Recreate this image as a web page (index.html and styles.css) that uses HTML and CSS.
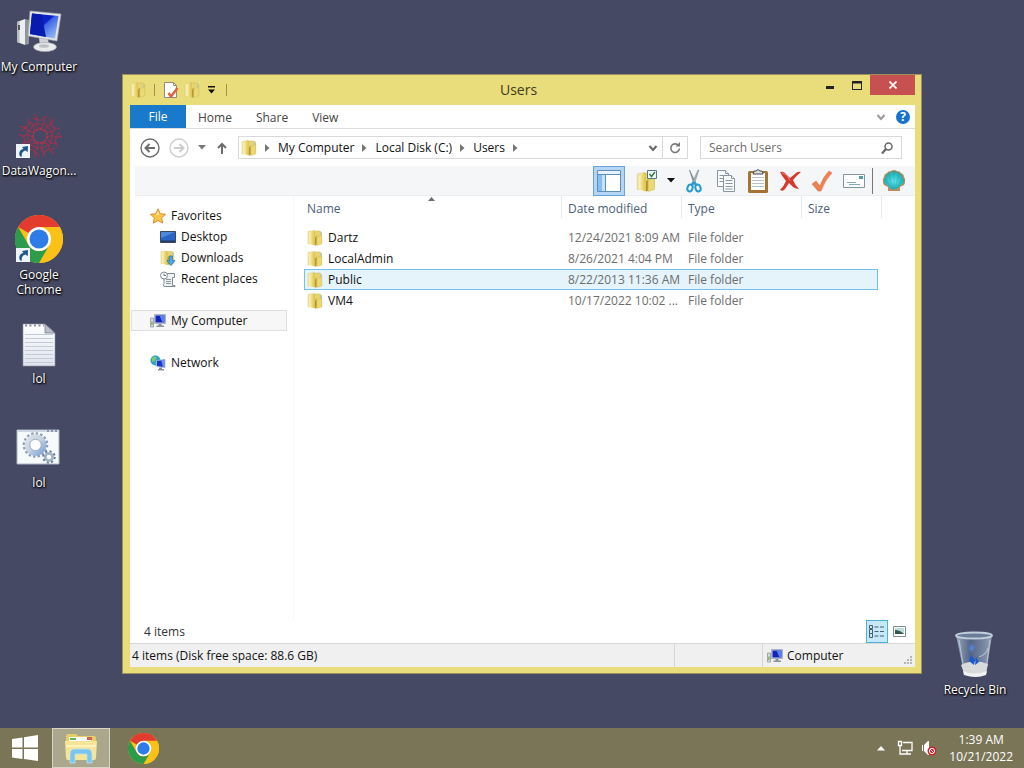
FILE: index.html
```html
<!DOCTYPE html>
<html lang="en">
<head>
    <meta charset="UTF-8">
    <meta name="viewport" content="width=device-width, initial-scale=1.0">
    <title>Users</title>
    <link rel="stylesheet" href="styles.css">
</head>
<body>
    <!-- Shared icons -->
    <svg class="sprite" aria-hidden="true">
        <defs>
            <linearGradient id="gFolder" x1="0" x2="1" y1="0" y2="0">
                <stop offset="0" stop-color="#fbf4c0"/><stop offset=".5" stop-color="#ecd873"/><stop offset="1" stop-color="#dcc050"/>
            </linearGradient>
            <linearGradient id="gScreen" x1="0" x2="1" y1="0" y2="1">
                <stop offset="0" stop-color="#0a1cae"/><stop offset=".45" stop-color="#0b22c8"/><stop offset=".5" stop-color="#3f67e4"/><stop offset="1" stop-color="#a9ccfa"/>
            </linearGradient>
            <linearGradient id="gPaper" x1="0" x2="0" y1="0" y2="1">
                <stop offset="0" stop-color="#fff"/><stop offset="1" stop-color="#dfe3ee"/>
            </linearGradient>
            <linearGradient id="gGear" x1="0" x2="1" y1="0" y2="1">
                <stop offset="0" stop-color="#dce2e6"/><stop offset=".5" stop-color="#c3d2e2"/><stop offset="1" stop-color="#7fa6d8"/>
            </linearGradient>
            <linearGradient id="gBin" x1="0" x2="1" y1="0" y2="0">
                <stop offset="0" stop-color="#b4c5da" stop-opacity=".8"/><stop offset=".4" stop-color="#5f789e" stop-opacity=".6"/><stop offset="1" stop-color="#a8b8cc" stop-opacity=".8"/>
            </linearGradient>
            <radialGradient id="gShell" cx=".5" cy=".55" r=".55">
                <stop offset="0" stop-color="#5fe4ee"/><stop offset=".65" stop-color="#2bbcc2"/><stop offset="1" stop-color="#3f9c92"/>
            </radialGradient>
        </defs>
        <symbol id="folder" viewBox="0 0 16 16">
            <path d="M1 1.500L7 .5v13L1 14z" fill="#f3e7a0" stroke="#dac878" stroke-width=".5"/>
            <path d="M6 1h7l1.500 1.500V13H6z" fill="#e6d470" stroke="#cbb654" stroke-width=".5"/>
            <path d="M13.300 2.500h1.200v3h-1.200z" fill="#9fc3cc"/>
            <path d="M2.500 3l5.500-2v14.500L2.500 14z" fill="url(#gFolder)"/>
            <path d="M8 7.500l1.800-2v9.500L8 15.500z" fill="#b2972f"/>
            <path d="M9.800 6.500l5-1.500v9l-5 1.500z" fill="#ead975" stroke="#cfb954" stroke-width=".4"/>
        </symbol>
        <symbol id="chrome" viewBox="0 0 48 48">
            <circle cx="24" cy="24" r="24" fill="#fbc116"/>
            <path d="M24 24L3.200 12A24 24 0 0 1 44.800 12z" fill="#e33b2e"/>
            <path d="M24 12h20.800A24 24 0 0 1 24 48l10.400-18z" fill="#fbc116"/>
            <path d="M3.200 12L13.600 30A12 12 0 0 0 34.400 30L24 48A24 24 0 0 1 3.200 12z" fill="#2c9b4b"/>
            <circle cx="24" cy="24" r="12" fill="#fff"/>
            <circle cx="24" cy="24" r="9.500" fill="#2f7be8"/>
        </symbol>
        <symbol id="computer" viewBox="0 0 48 48">
            <path d="M2 15l8-3v26l-8-3z" fill="#eceef0"/>
            <path d="M2 15l2.500-1v22L2 35z" fill="#b7bbc0"/>
            <path d="M10 12l4 1v24l-4 1z" fill="#8f959c"/>
            <path d="M3 18h2v5H3z" fill="#55585c"/>
            <path d="M24 30l9 1 1 9h-9z" fill="#cfd3d6"/>
            <ellipse cx="30" cy="40" rx="11.500" ry="4.500" fill="#e9ebec" stroke="#a7abb0" stroke-width=".7"/>
            <ellipse cx="29" cy="39" rx="5" ry="1.800" fill="#bcc0c4"/>
            <path d="M15 4l31 3-4 27-29-5z" fill="#e2e5e8" stroke="#a5a9b0" stroke-width=".6"/>
            <path d="M17 6.500l26.500 2.500-3.500 22.500-25-4.500z" fill="url(#gScreen)"/>
            <path d="M17 6.500l9.500.9L31 30l-16-3z" fill="#071cae"/>
        </symbol>
        <symbol id="pc-small" viewBox="0 0 16 16">
            <path d="M.5 5h3v9h-3z" fill="#d5dbdd" stroke="#777f83" stroke-width=".6"/>
            <path d="M1.200 8.500h1.500V12H1.200z" fill="#86b05d"/>
            <path d="M4.500 1.500h11v9h-11z" fill="#c9d1e6" stroke="#8691ad" stroke-width=".6"/>
            <path d="M5.500 2.500h9v7h-9z" fill="#1325b7"/>
            <path d="M9.500 2.500h5v7h-2z" fill="#5b80ea"/>
            <path d="M8.500 11h3v1.500H14V14H6.500v-1.500h2z" fill="#8a929b"/>
        </symbol>
        <symbol id="shortcut" viewBox="0 0 14 14">
            <path d="M0 0h14v14H0z" fill="#eef4fa"/>
            <path d="M4 12.500C2.200 8.500 4 5.500 7.500 5L6 3l6-1-.3 6.300-2-1.800C7 7 5 9 6 12.500z" fill="#1d578f"/>
        </symbol>
        <symbol id="crumb" viewBox="0 0 5 8"><path d="M0 0l4.500 4L0 8z" fill="#777"/></symbol>
        <symbol id="chevron" viewBox="0 0 10 8"><path d="M1.500 2L5 6l3.500-4" fill="none" stroke="currentColor" stroke-width="2"/></symbol>
    </svg>

    <main class="desktop">
        <nav class="shortcuts" aria-label="Desktop icons">
            <a class="shortcut" href="#">
                <svg class="shortcut-icon"><use href="#computer"/></svg>
                <span>My Computer</span>
            </a>
            <a class="shortcut" href="#">
                <svg class="shortcut-icon" viewBox="0 0 48 48">
                    <g fill="none" stroke="#973450" stroke-width="1.200">
                        <g id="ray"><path d="M25 18l-4-5 2-4-3-6M25 18l5-5-2-5 4-3M17 7l7 2 6 0M21 13l9 0"/></g>
                        <use href="#ray" transform="rotate(51 25 25)"/>
                        <use href="#ray" transform="rotate(103 25 25)"/>
                        <use href="#ray" transform="rotate(154 25 25)"/>
                        <use href="#ray" transform="rotate(206 25 25)"/>
                        <use href="#ray" transform="rotate(257 25 25)"/>
                        <use href="#ray" transform="rotate(309 25 25)"/>
                        <circle cx="25" cy="25" r="7" stroke="#b8334c" stroke-width="1.500" stroke-dasharray="3 1"/>
                    </g>
                    <use href="#shortcut" x="1" y="33" width="14" height="14"/>
                </svg>
                <span>DataWagon...</span>
            </a>
            <a class="shortcut" href="#">
                <svg class="shortcut-icon" viewBox="0 0 48 48">
                    <use href="#chrome" width="48" height="48"/>
                    <use href="#shortcut" x="1" y="33" width="14" height="14"/>
                </svg>
                <span>Google Chrome</span>
            </a>
            <a class="shortcut" href="#">
                <svg class="shortcut-icon" viewBox="0 0 48 48">
                    <path d="M8 5h22l10 9v33H8z" fill="url(#gPaper)" stroke="#8d93a4" stroke-width=".6"/>
                    <path d="M30 5v9h10z" fill="#b9bfcc" stroke="#6b7080" stroke-width=".7"/>
                    <path d="M10 6.500h19" stroke="#8b90a0" stroke-width="2" stroke-dasharray="2 2.500"/>
                    <path d="M10 15.500h28M10 19.500h28M10 23.500h28M10 27.500h28M10 31.500h28M10 35.500h28M10 39.500h28M10 43.500h28" stroke="#c3cad8"/>
                </svg>
                <span>lol</span>
            </a>
            <a class="shortcut" href="#">
                <svg class="shortcut-icon" viewBox="0 0 48 48">
                    <path d="M2 7h42v34H2z" fill="#f6fafb" stroke="#a9b3c4"/>
                    <path d="M2 7h42v2H2z" fill="#ccd5e2"/>
                    <path d="M32 8h2M36 8h2M40 8h2" stroke="#4d5872"/>
                    <circle cx="20.500" cy="22" r="11.500" fill="none" stroke="#8a9ab2" stroke-width="2.600" stroke-dasharray="2.400 2.100"/>
                    <circle cx="20.500" cy="22" r="8.300" fill="#fff" stroke="url(#gGear)" stroke-width="5"/>
                    <circle cx="20.500" cy="22" r="5.700" fill="none" stroke="#7f93b4" stroke-width=".7"/>
                    <circle cx="34" cy="34" r="5.500" fill="none" stroke="#687c98" stroke-width="2.500" stroke-dasharray="2 2.300"/>
                    <circle cx="34" cy="34" r="3.700" fill="#fff" stroke="#9fb4c8" stroke-width="2.800"/>
                </svg>
                <span>lol</span>
            </a>
        </nav>

        <a class="shortcut recycle-bin" href="#">
            <svg class="shortcut-icon" viewBox="0 0 48 48">
                <path d="M5 5h36l-6 39q-12 6-22 0z" fill="url(#gBin)"/>
                <path d="M10 35q13-7 27-1l-2 9q-11 6-22 0z" fill="#d8d9db"/>
                <path d="M12 41q11 5 24 0l-1 4q-10 4-22 0z" fill="#f2f2f2"/>
                <path d="M18 31l2-6 4 5-1 5zM25 27l3 5-4 3z" fill="#1d58cf"/>
                <path d="M20 14l4 3-3 5-3-3z" fill="#557fca"/>
                <path d="M8 10l5 30M39 10l-4 30M28 27q8-3 9-9" fill="none" stroke="#d4dfec" stroke-opacity=".6" stroke-width="1.200"/>
                <ellipse cx="23" cy="5.500" rx="18" ry="3" fill="#6a7d9b" stroke="#c3cedb" stroke-width="1.800"/>
            </svg>
            <span>Recycle Bin</span>
        </a>

        <section class="window" aria-label="Users">
            <header class="titlebar">
                <div class="quick-access">
                    <svg class="icon-16"><use href="#folder"/></svg>
                    <i class="bar-sep"></i>
                    <button class="qa-button" aria-label="Properties">
                        <svg class="icon-16" viewBox="0 0 16 16">
                            <path d="M1.500.5h9l3 3v12h-12z" fill="#fff" stroke="#8f8a80"/>
                            <path d="M10.500.5v3h3" fill="none" stroke="#8f8a80"/>
                            <path d="M5.500 11l2.500 3.500L14.500 6" fill="none" stroke="#df6640" stroke-width="2.600"/>
                        </svg>
                    </button>
                    <button class="qa-button" aria-label="New folder"><svg class="icon-16"><use href="#folder"/></svg></button>
                    <button class="qa-button qa-more" aria-label="Customize">
                        <svg width="7" height="8" viewBox="0 0 7 8"><path d="M0 0h7v1.500H0zM0 3.500h7L3.500 7.500z" fill="#111"/></svg>
                    </button>
                    <i class="bar-sep"></i>
                </div>
                <h1 class="title">Users</h1>
                <div class="controls">
                    <button class="control" aria-label="Minimize"><svg width="10" height="10"><path d="M1 6h8v3H1z" fill="#222"/></svg></button>
                    <button class="control" aria-label="Maximize"><svg width="10" height="9"><path d="M0 0h10v9H0zM1 2.500V8h8V2.500z" fill="#222" fill-rule="evenodd"/></svg></button>
                    <button class="control control-close" aria-label="Close"><svg width="8" height="8"><path d="M.5.5l7 7M7.500.5l-7 7" stroke="#fff" stroke-width="1.700"/></svg></button>
                </div>
            </header>

            <div class="client">
                <div class="ribbon">
                    <button class="tab tab-file">File</button>
                    <button class="tab">Home</button>
                    <button class="tab">Share</button>
                    <button class="tab">View</button>
                    <div class="ribbon-end">
                        <button class="plain" aria-label="Expand the ribbon"><svg class="grey" width="10" height="8"><use href="#chevron"/></svg></button>
                        <button class="plain help" aria-label="Help">?</button>
                    </div>
                </div>

                <div class="address-row">
                    <button class="plain" aria-label="Back">
                        <svg width="20" height="20" viewBox="0 0 20 20" fill="none" stroke="#6d6d6d"><circle cx="10" cy="10" r="9" stroke-width="1.400"/><path d="M15 10H6M9.500 6l-4 4 4 4" stroke-width="2"/></svg>
                    </button>
                    <button class="plain" aria-label="Forward">
                        <svg width="20" height="20" viewBox="0 0 20 20" fill="none" stroke="#cdcdcd"><circle cx="10" cy="10" r="9" stroke-width="1.400"/><path d="M5 10h9M10.500 6l4 4-4 4" stroke-width="2"/></svg>
                    </button>
                    <button class="plain" aria-label="Recent locations"><svg width="8" height="5"><path d="M0 0h8L4 4.500z" fill="#777"/></svg></button>
                    <button class="plain" aria-label="Up">
                        <svg width="12" height="12" viewBox="0 0 12 12" fill="none" stroke="#6d6d6d" stroke-width="2"><path d="M7 12V2M3 6l4-4 4 4"/></svg>
                    </button>
                    <div class="address">
                        <svg class="icon-16"><use href="#folder"/></svg>
                        <svg class="crumb-arrow"><use href="#crumb"/></svg>
                        <a href="#">My Computer</a>
                        <svg class="crumb-arrow"><use href="#crumb"/></svg>
                        <a href="#">Local Disk (C:)</a>
                        <svg class="crumb-arrow"><use href="#crumb"/></svg>
                        <a href="#">Users</a>
                        <svg class="crumb-arrow"><use href="#crumb"/></svg>
                        <button class="plain address-drop" aria-label="Previous locations"><svg width="10" height="8"><use href="#chevron"/></svg></button>
                        <button class="plain refresh" aria-label="Refresh">
                            <svg width="12" height="12" viewBox="0 0 12 12"><path d="M9.500 3.500a4.300 4.300 0 1 0 .9 3" fill="none" stroke="#777" stroke-width="1.600"/><path d="M6.500 4.500h4.500V0z" fill="#777"/></svg>
                        </button>
                    </div>
                    <div class="search">
                        <input type="text" placeholder="Search Users" aria-label="Search Users">
                        <svg width="12" height="12" viewBox="0 0 12 12" fill="none" stroke="#666"><circle cx="7.500" cy="4.500" r="3.500" stroke-width="1.500"/><path d="M5 7l-4 4.500" stroke-width="2.200"/></svg>
                    </div>
                </div>

                <div class="commands">
                    <button class="command active" aria-label="Navigation pane">
                        <svg width="24" height="22" viewBox="0 0 24 22"><path d="M.5.5h23v21H.5z" fill="#fff" stroke="#5a8fbe"/><path d="M1 1h22v3H1z" fill="#e8f1fa"/><path d="M1 4.500h22M8.500 5v16" stroke="#5a8fbe"/><path d="M1 5h7v16H1z" fill="#89bfee"/><path d="M5 5h3v16H5z" fill="#c7e2f8"/></svg>
                    </button>
                    <button class="command" aria-label="Select">
                        <svg width="24" height="24" viewBox="0 0 24 24"><use href="#folder" x="0" y="2" width="20" height="22"/><path d="M11.500 1.500h9v8h-9z" fill="#f1f8f3" stroke="#4f7b80"/><path d="M13.500 5l2 2.500L19 3" fill="none" stroke="#34774d" stroke-width="1.400"/></svg>
                    </button>
                    <button class="command command-arrow" aria-label="Select options"><svg width="8" height="5"><path d="M0 0h8L4 4.500z" fill="#111"/></svg></button>
                    <button class="command" aria-label="Cut">
                        <svg width="24" height="24" viewBox="0 0 24 24"><path d="M7 1l1 0 6 13-2 2z" fill="#7e8b95"/><path d="M17 1l-1 0-6 13 2 2z" fill="#a5b0b8" stroke="#69757e" stroke-width=".4"/><g fill="none" stroke="#249bd2" stroke-width="2"><path d="M12 13l-2.500 3M12 13l2.500 3"/><ellipse cx="8" cy="19" rx="2.500" ry="3.500" transform="rotate(20 8 19)"/><ellipse cx="16" cy="19" rx="2.500" ry="3.500" transform="rotate(-20 16 19)"/></g></svg>
                    </button>
                    <button class="command" aria-label="Copy">
                        <svg width="24" height="24" viewBox="0 0 24 24" fill="#fbfcfd" stroke="#8795a3"><path d="M3.500 1.500h8l3 3v13h-11z"/><path d="M11.500 1.500v3h3M5.500 6.500h5M5.500 9.500h5M5.500 12.500h5"/><path d="M9.500 6.500h8l3 3v13h-11z"/><path d="M17.500 6.500v3h3M11.500 11.500h7M11.500 14.500h7M11.500 17.500h7M11.500 20h7"/></svg>
                    </button>
                    <button class="command" aria-label="Paste">
                        <svg width="24" height="24" viewBox="0 0 24 24"><rect x="2" y="2" width="20" height="22" rx="1.500" fill="#a67332"/><path d="M5 4h14v17H5z" fill="#fff"/><path d="M6 8.500h12M6 11.500h12M6 14.500h12M6 17.500h12" stroke="#b5c2ce"/><path d="M8 2h2q2-3 4 0h2l1 3H7z" fill="#d9dde0" stroke="#454b50"/></svg>
                    </button>
                    <button class="command" aria-label="Delete">
                        <svg width="24" height="24" viewBox="0 0 24 24"><path d="M2 3q3-1 5 1l5 5 6-5q2-2 5-1-5 4-8 8 2 5 6 9-3 0-6-2l-4-4-4 6q-2 3-5 1 4-4 6-9Q4 7 2 3z" fill="#d43a2a"/><path d="M4 3.500q6 2 8 8" fill="none" stroke="#ef8a76"/></svg>
                    </button>
                    <button class="command" aria-label="Properties">
                        <svg width="24" height="24" viewBox="0 0 24 24"><path d="M2 15l4-3 4 5Q13 8 19 2l3 2Q15 11 11 22H8z" fill="#ee8252" stroke="#d96a43" stroke-width=".5"/></svg>
                    </button>
                    <button class="command" aria-label="E-mail">
                        <svg width="24" height="24" viewBox="0 0 24 24"><path d="M1.500 5.500h21v13h-21z" fill="#fff" stroke="#82949f"/><path d="M17 7h4v3h-4z" fill="#4d9fa7"/><path d="M5 13.500h9M7 15.500h11" stroke="#83a9bb"/></svg>
                    </button>
                    <i class="command-sep"></i>
                    <button class="command" aria-label="Shell">
                        <svg width="24" height="24" viewBox="0 0 24 24"><path d="M12 1q2 0 3 1 3 0 4 2 3 1 3 4 2 2 1 5 0 3-3 4l-2 1v4H6v-4l-2-1q-3-1-3-4-1-3 1-5 0-3 3-4 1-2 4-2 1-1 3-1z" fill="#c28b5b"/><path d="M12 2q2 0 3 1 3 0 4 2 2 1 2 4 2 2 1 4 0 2-3 3l-4 4q-3 1-6 0l-4-4q-3-1-3-3-1-2 1-4 0-3 2-4 1-2 4-2 1-1 3-1z" fill="url(#gShell)"/><path d="M12 20V3M11 20L7 5M13 20l4-15M10 20L3 9M14 20l7-11" stroke="#168b96" stroke-opacity=".4" stroke-width=".7"/></svg>
                    </button>
                </div>

                <div class="panes">
                    <nav class="tree" aria-label="Navigation pane">
                        <div class="tree-group">
                            <a class="tree-item" href="#">
                                <svg class="icon-16" viewBox="0 0 16 16"><path d="M8 .8l2.200 4.900 5.300.6-3.900 3.600 1.100 5.300L8 12.500l-4.700 2.700 1.100-5.300L.5 6.300l5.300-.6z" fill="#fbc545" stroke="#dd8d2b"/><path d="M8 3.500l1.200 3-3.700.5z" fill="#fff0b0"/></svg>
                                Favorites
                            </a>
                            <a class="tree-item child" href="#">
                                <svg class="icon-16" viewBox="0 0 16 16"><path d="M.5 2.500h15v11H.5z" fill="#2a65c5" stroke="#3a4760"/><path d="M1 3h14L1 9z" fill="#5088db"/><path d="M1 11.500h14V13H1z" fill="#24395f"/></svg>
                                Desktop
                            </a>
                            <a class="tree-item child" href="#">
                                <svg class="icon-16" viewBox="0 0 16 16"><use href="#folder" width="15" height="16"/><path d="M9.500 6h3v4.500H15L11 15.500l-4-5h2.500z" fill="#4aa8ec" stroke="#2470ad" stroke-width=".7"/></svg>
                                Downloads
                            </a>
                            <a class="tree-item child" href="#">
                                <svg class="icon-16" viewBox="0 0 16 16"><path d="M4 2.500h10.500v4h-2v8H15v1H4q-1.500-2 0-3z" fill="#eef1f2" stroke="#808c91"/><path d="M6 8.500h5M6 10.500h5M6 12.500h5" stroke="#8c989c"/><circle cx="4" cy="4.500" r="3.500" fill="#fff" stroke="#808c91"/><path d="M4 2.500v2h2" fill="none" stroke="#66777c"/></svg>
                                Recent places
                            </a>
                        </div>
                        <div class="tree-group">
                            <a class="tree-item selected" href="#">
                                <svg class="icon-16"><use href="#pc-small"/></svg>
                                My Computer
                            </a>
                        </div>
                        <div class="tree-group">
                            <a class="tree-item" href="#">
                                <svg class="icon-16" viewBox="0 0 16 16"><circle cx="5.500" cy="5.500" r="5" fill="#2e9fc0"/><path d="M2 3q3-3 5 0l-2 3-3 1zM5 8l3-1-1 3z" fill="#77ca7e"/><path d="M6.500 5.500l8.500-1v8l-8.500-1z" fill="#1a35c2" stroke="#bcc8de" stroke-width=".8"/><path d="M11 5l4-.5v8l-2-.3z" fill="#6d93ee"/><path d="M9 12.500h3V14h2v1.500H8V14h1z" fill="#87919b"/></svg>
                                Network
                            </a>
                        </div>
                    </nav>

                    <div class="list">
                        <table class="files">
                            <colgroup><col><col class="col-date"><col class="col-type"><col class="col-size"><col class="col-edge"></colgroup>
                            <thead>
                                <tr>
                                    <th class="sorted">Name<svg class="sort" width="7" height="4"><path d="M0 4h7L3.500 0z" fill="#6d6d6d"/></svg></th>
                                    <th>Date modified</th>
                                    <th>Type</th>
                                    <th colspan="2">Size</th>
                                </tr>
                            </thead>
                            <tbody>
                                <tr><td><div class="file"><svg class="icon-16"><use href="#folder"/></svg>Dartz</div></td><td>12/24/2021 8:09 AM</td><td>File folder</td><td></td></tr>
                                <tr><td><div class="file"><svg class="icon-16"><use href="#folder"/></svg>LocalAdmin</div></td><td>8/26/2021 4:04 PM</td><td>File folder</td><td></td></tr>
                                <tr class="hovered"><td><div class="file"><svg class="icon-16"><use href="#folder"/></svg>Public</div></td><td>8/22/2013 11:36 AM</td><td>File folder</td><td></td></tr>
                                <tr><td><div class="file"><svg class="icon-16"><use href="#folder"/></svg>VM4</div></td><td>10/17/2022 10:02 ...</td><td>File folder</td><td></td></tr>
                            </tbody>
                        </table>
                    </div>
                </div>

                <div class="details">
                    <span>4 items</span>
                    <div class="view-modes">
                        <button class="view-mode active" aria-label="Details">
                            <svg width="16" height="13" viewBox="0 0 16 13" fill="none" stroke="#45616c"><path d="M.5.5h3v3h-3zM.5 4.500h3v4h-3zM.5 8.500h3v4h-3z"/><path d="M5.500 2h4M11 2h4M5.500 6.500h4M11 6.500h4M5.500 11h4M11 11h4"/></svg>
                        </button>
                        <button class="view-mode" aria-label="Large icons">
                            <svg width="13" height="11" viewBox="0 0 13 11"><path d="M.5.5h12v10H.5z" fill="#fff" stroke="#828b90"/><path d="M2 2h9v6H2z" fill="#bcdde0"/><path d="M2 4q5 0 9 4H2z" fill="#31584e"/></svg>
                        </button>
                    </div>
                </div>

                <footer class="status">
                    <span class="status-main">4 items (Disk free space: 88.6 GB)</span>
                    <span class="status-blank"></span>
                    <span class="status-zone">
                        <svg class="icon-16"><use href="#pc-small"/></svg>
                        Computer
                        <svg class="grip" width="9" height="9"><path d="M6 0h2v2H6zM3 3h2v2H3zM6 3h2v2H6zM0 6h2v2H0zM3 6h2v2H3zM6 6h2v2H6z" fill="#b5b5b5"/></svg>
                    </span>
                </footer>
            </div>
        </section>
    </main>

    <footer class="taskbar">
        <button class="start" aria-label="Start">
            <svg width="26" height="26" viewBox="0 0 26 26"><path d="M0 4l10.500-1.500v10H0zM12 2.200L26 0v12.500H12zM0 14h10.500v10L0 22.500zM12 14h14v12l-14-2z" fill="#fff"/></svg>
        </button>
        <button class="task active" aria-label="File Explorer">
            <svg width="34" height="32" viewBox="0 0 34 32">
                <path d="M2 4q0-2 2-2h8l2 2h16q2 0 2 2v20H2z" fill="#e5cf68"/>
                <path d="M5 5h22v4H5z" fill="#fff"/><path d="M6 6h6v2H6z" fill="#62b84b"/><path d="M23 5h5v3h-5z" fill="#d6634b"/>
                <path d="M1 9h32l-1 17q0 2-2 2H4q-2 0-2-2z" fill="#f6e597"/>
                <path d="M2 13h30v2H2z" fill="#fbf2bd"/>
                <path d="M6 31V22q0-5 5-5h12q5 0 5 5v9h-5v-8q0-1-1-1H12q-1 0-1 1v8z" fill="#7bc5ec" stroke="#b9e4f7" stroke-width=".8"/>
            </svg>
        </button>
        <button class="task" aria-label="Google Chrome">
            <svg width="31" height="31"><use href="#chrome"/></svg>
        </button>
        <div class="tray">
            <button class="plain" aria-label="Show hidden icons"><svg width="8" height="5"><path d="M0 4.500h8L4 0z" fill="#fff"/></svg></button>
            <svg width="16" height="16" viewBox="0 0 16 16" fill="none" stroke="#fff" stroke-width="1.300"><path d="M6 2.500h9v8H5M10 10.500v3M6 14h8M3 6v8h3"/><path d="M1.500 1.500h3v4h-3z"/></svg>
            <svg width="16" height="16" viewBox="0 0 16 16"><path d="M1 5h1v6H1zM3 5l4-4h1v14H7l-4-4z" fill="#fff"/><circle cx="11" cy="11" r="4.500" fill="#d2222c"/><circle cx="11" cy="11" r="2.600" fill="none" stroke="#fff"/><path d="M9 9l4 4" stroke="#fff"/></svg>
            <time class="clock">1:39 AM<br>10/21/2022</time>
        </div>
    </footer>
</body>
</html>
```
FILE: styles.css
```css
* {
    box-sizing: border-box;
}
body {
    margin: 0;
    height: 100vh;
    display: flex;
    flex-direction: column;
    overflow: hidden;
    background-color: #464963;
    font: 12px/15px "Open Sans", "Noto Sans", sans-serif;
    color: #111;
}
a {
    color: inherit;
    text-decoration: none;
}
button, input {
    font: inherit;
    color: inherit;
    border: 0;
    padding: 0;
    background: none;
}
svg {
    display: block;
    flex: none;
}
.sprite {
    position: absolute;
    width: 0;
    height: 0;
}
.icon-16 {
    width: 16px;
    height: 16px;
}
.plain {
    display: flex;
    align-items: center;
    justify-content: center;
}

/* Desktop */
.desktop {
    position: relative;
    flex: 1;
}
.shortcuts {
    display: flex;
    flex-direction: column;
}
.shortcut {
    display: flex;
    flex-direction: column;
    align-items: center;
    gap: 4px;
    width: 78px;
    height: 104px;
    padding-top: 7px;
    color: #fff;
    text-align: center;
    text-shadow: 1px 1px 2px #000, 0 1px 2px #000;
}
.shortcut-icon {
    width: 48px;
    height: 48px;
}
.recycle-bin {
    position: absolute;
    right: 10px;
    bottom: 1px;
}

/* Explorer window */
.window {
    position: absolute;
    inset: 74px 102px 54px 122px;
    display: flex;
    flex-direction: column;
    padding: 0 6px 6px 7px;
    border: 1px solid #9c915c;
    background-color: #e9dc7b;
}
.titlebar {
    display: grid;
    grid-template-columns: 1fr auto 1fr;
    height: 30px;
}
.quick-access {
    display: flex;
    align-items: center;
    gap: 5px;
}
.bar-sep {
    width: 1px;
    height: 12px;
    margin: 0 3px;
    background-color: #a98f4a;
}
.qa-button {
    display: flex;
}
.qa-more {
    padding: 0 3px;
}
.title {
    margin: 0;
    padding-right: 8px;
    font-size: 14px;
    font-weight: 400;
    line-height: 30px;
    color: #3f3a18;
}
.controls {
    display: flex;
    justify-content: flex-end;
}
.control {
    display: flex;
    align-items: center;
    justify-content: center;
    width: 27px;
    height: 20px;
}
.control-close {
    width: 45px;
    background-color: #c75050;
}
.client {
    flex: 1;
    display: flex;
    flex-direction: column;
    min-height: 0;
    background-color: #fff;
}

/* Ribbon tabs */
.ribbon {
    display: flex;
    height: 24px;
    border-bottom: 1px solid #dcdddf;
}
.tab {
    padding: 2px 12px 0;
    color: #444;
}
.tab-file {
    width: 56px;
    padding-top: 0;
    background-color: #1979ca;
    color: #fff;
}
.ribbon-end {
    display: flex;
    align-items: center;
    gap: 10px;
    margin-left: auto;
    padding-right: 5px;
}
.grey {
    color: #999;
}
.help {
    width: 14px;
    height: 14px;
    border-radius: 50%;
    background-color: #1873c9;
    color: #fff;
    font-weight: 700;
}

/* Address bar */
.address-row {
    display: flex;
    align-items: center;
    gap: 9px;
    height: 37px;
    padding: 0 13px 0 10px;
}
.address {
    flex: 1;
    display: flex;
    align-items: center;
    gap: 8px;
    height: 23px;
    margin-left: 2px;
    padding-left: 2px;
    border: 1px solid #d9d9d9;
    color: #111;
}
.crumb-arrow {
    width: 5px;
    height: 8px;
}
.address-drop {
    margin-left: auto;
    margin-right: -4px;
    color: #666;
}
.refresh {
    width: 25px;
    height: 21px;
    border-left: 1px solid #d9d9d9;
}
.search {
    display: flex;
    align-items: center;
    width: 202px;
    height: 23px;
    margin-left: 3px;
    padding: 0 8px;
    border: 1px solid #d9d9d9;
}
.search input {
    flex: 1;
    min-width: 0;
    outline: 0;
}
.search input::placeholder {
    color: #6d6d6d;
    opacity: 1;
}

/* Command bar */
.commands {
    display: flex;
    align-items: center;
    justify-content: flex-end;
    height: 30px;
    margin-left: 5px;
    padding-right: 5px;
    background-color: #f5f6f8;
    border-bottom: 1px solid #eceef1;
}
.command {
    display: flex;
    align-items: center;
    justify-content: center;
    width: 32px;
    height: 30px;
}
.command.active {
    margin-right: 7px;
    border: 1px solid #6ca0d8;
    background-color: #b5d5f5;
}
.command-arrow {
    width: 14px;
}
.command-sep {
    width: 1px;
    height: 26px;
    margin: 0 5px 0 2px;
    background-color: #777;
}

/* Navigation pane */
.panes {
    flex: 1;
    display: flex;
    min-height: 0;
}
.tree {
    width: 164px;
    padding: 9px 6px 0 1px;
    border-right: 1px solid #f8f8f9;
}
.tree-group {
    margin-bottom: 21px;
}
.tree-item {
    display: flex;
    align-items: center;
    gap: 5px;
    height: 21px;
    padding-left: 18px;
    border: 1px solid transparent;
}
.tree-item.child {
    padding-left: 28px;
}
.tree-item.selected {
    border-color: #dedede;
    background-color: #f7f7f7;
}

/* File list */
.list {
    flex: 1;
    padding: 0 33px 0 10px;
}
.files {
    width: 100%;
    table-layout: fixed;
    border-spacing: 0;
    color: #6d6d6d;
}
.col-date, .col-type {
    width: 120px;
}
.col-size {
    width: 76px;
}
.col-edge {
    width: 4px;
}
.files th {
    height: 22px;
    padding: 2px 5px 0 6px;
    border-right: 1px solid #e9ebee;
    color: #4c607a;
    font-weight: 400;
    text-align: left;
}
.files th.sorted {
    position: relative;
    padding-left: 3px;
}
.sort {
    position: absolute;
    top: 1px;
    left: 50%;
    margin-left: -4px;
}
.files tbody::before {
    content: "";
    display: table-row;
    height: 9px;
}
.files td {
    height: 21px;
    padding: 0 5px 0 6px;
    border: solid transparent;
    border-width: 1px 0;
    white-space: nowrap;
}
.files td:first-child {
    padding-left: 2px;
    border-left-width: 1px;
}
.files td:nth-child(4) {
    border-right-width: 1px;
}
.files .hovered td {
    border-color: #70c0e7;
    background-color: #e5f3fb;
}
.file {
    display: flex;
    align-items: center;
    gap: 5px;
    color: #111;
}

/* Details and status bars */
.details {
    display: flex;
    align-items: center;
    height: 24px;
    padding: 0 5px 0 14px;
    color: #333;
}
.view-modes {
    display: flex;
    margin-left: auto;
}
.view-mode {
    display: flex;
    align-items: center;
    justify-content: center;
    width: 22px;
    height: 23px;
}
.view-mode.active {
    border: 1px solid #4fb0d8;
    background-color: #c6e9f8;
}
.status {
    display: flex;
    height: 24px;
    border-top: 1px solid #d7d7d7;
    background-color: #f0f0f0;
    line-height: 23px;
}
.status-main {
    flex: 1;
    padding-left: 2px;
}
.status-blank {
    width: 88px;
    border-left: 1px solid #d7d7d7;
}
.status-zone {
    display: flex;
    align-items: center;
    gap: 4px;
    width: 153px;
    padding: 0 2px 0 4px;
    border-left: 1px solid #d7d7d7;
}
.grip {
    align-self: flex-end;
    margin: 0 0 2px auto;
}

/* Taskbar */
.taskbar {
    display: flex;
    height: 40px;
    background-color: #7a7556;
}
.start, .task {
    display: flex;
    align-items: center;
    justify-content: center;
}
.start {
    width: 50px;
    margin-right: 2px;
}
.task {
    width: 58px;
    margin-right: 4px;
}
.task.active {
    border: 1px solid #d6d4c6;
    background-color: #aaa78d;
}
.tray {
    display: flex;
    align-items: center;
    gap: 8px;
    margin-left: auto;
    padding-right: 11px;
    color: #fff;
}
.tray .plain {
    margin-right: 4px;
}
.clock {
    margin-left: 4px;
    line-height: 17px;
    text-align: center;
}
```
